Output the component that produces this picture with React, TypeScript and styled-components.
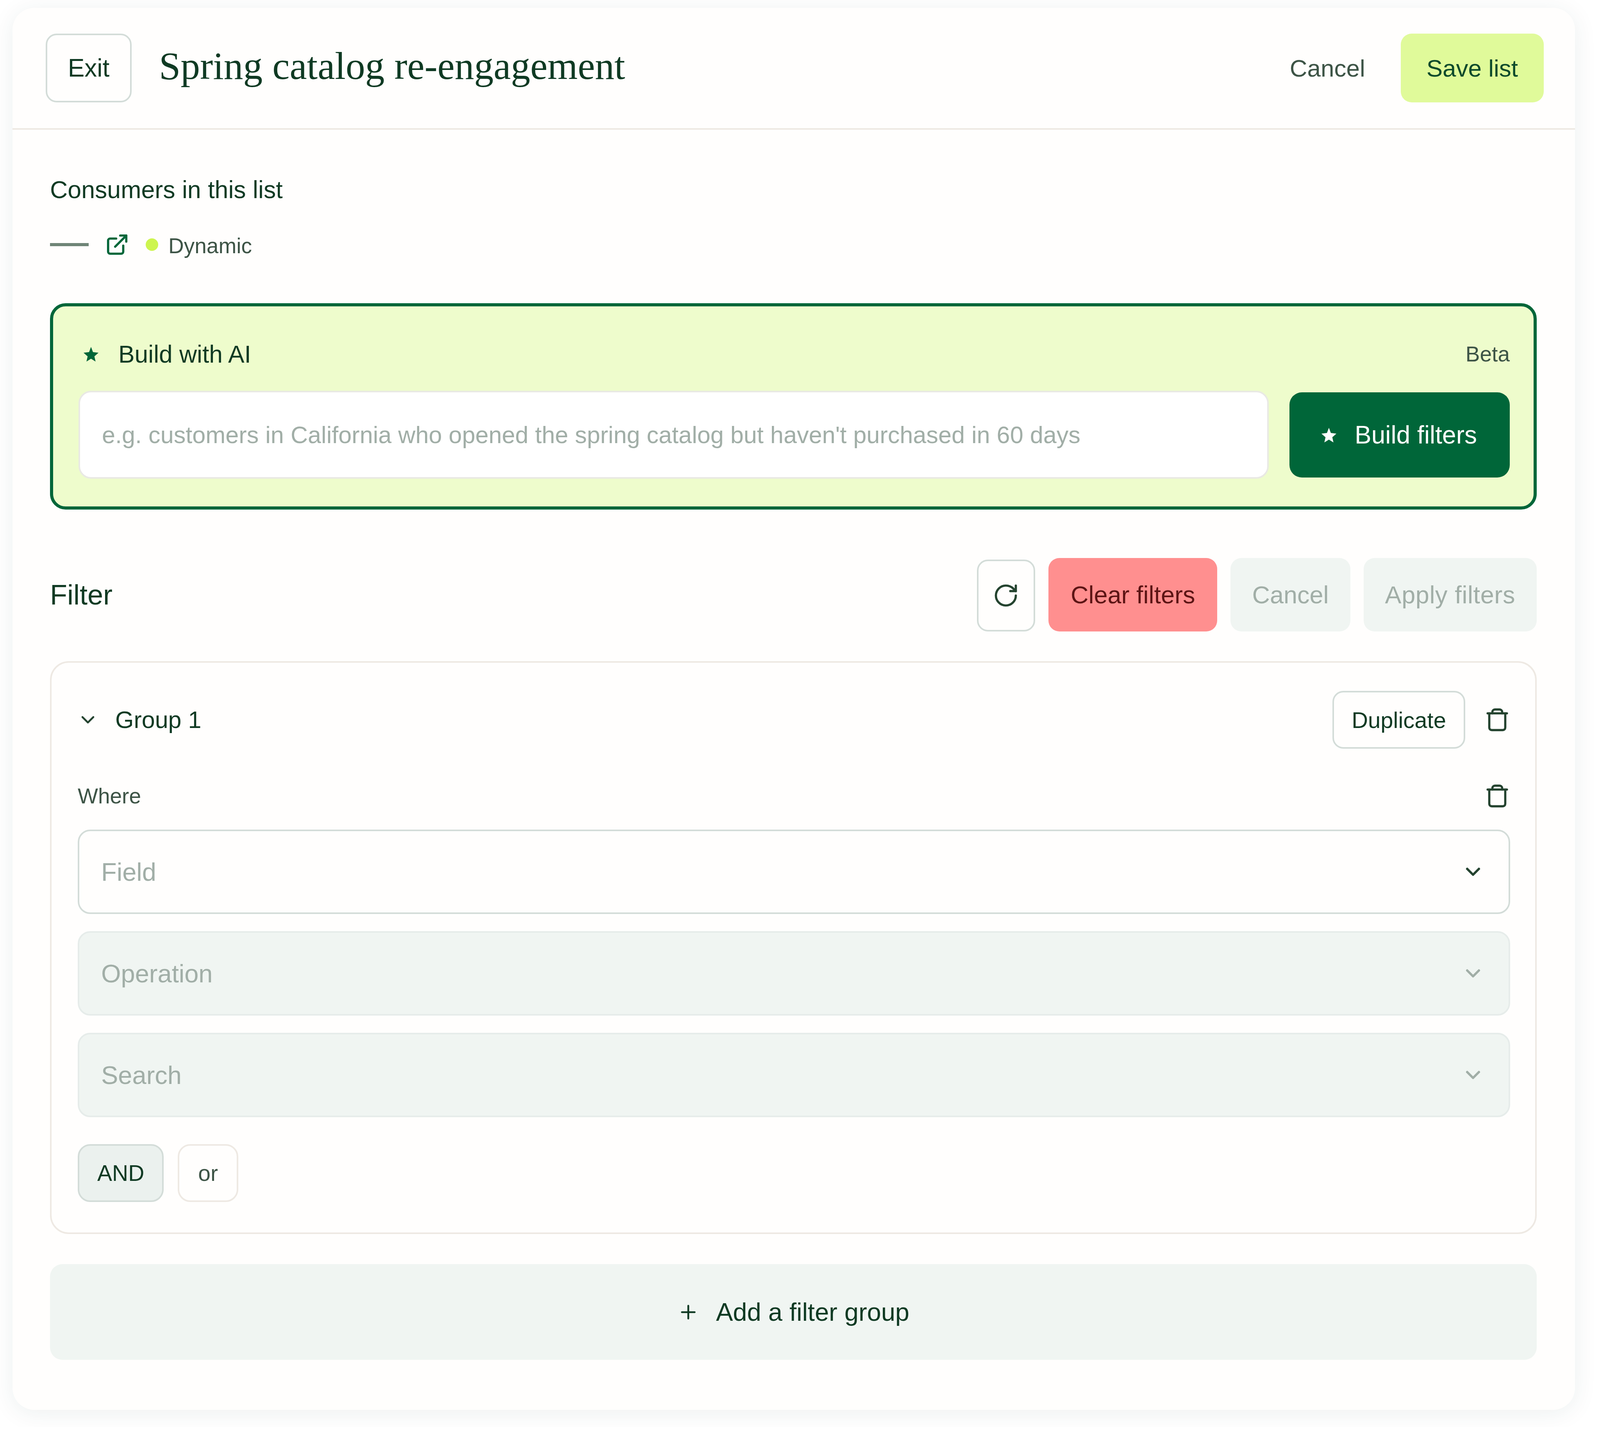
import styled, { createGlobalStyle } from 'styled-components';
import { ChevronDown, ExternalLink, Plus, RotateCw } from 'lucide-react';

// The page really opens at 4096x3680 (window.innerWidth), so horizontal sizes are the
// reference's x 0.8 and vertical sizes are the reference's.

const COLORS = {
  INK: '#0f3a23',
  BODY: '#3d5446',
  ICON: '#24432f',
  MUTED: '#a1aea7',
  GREEN: '#006639',
  LINE: '#d3dcd8',
  SOFT_LINE: '#eee9e3',
  DISABLED: '#f0f5f2',
  SURFACE: '#fffefd',
};

const GlobalStyle = createGlobalStyle`
  html, body {
    margin: 0;
    background: #ffffff;
  }
  body {
    font-family: "Liberation Sans", Arial, sans-serif;
    color: ${COLORS.INK};
  }
  * {
    box-sizing: border-box;
  }
  button {
    font-family: "Liberation Sans", Arial, sans-serif;
  }
`;

const StarIcon = ({ size, color }: { size: number; color: string }) => (
  <svg width={size} height={size} viewBox="0 0 24 24" fill={color}>
    <polygon points="12,1 15,9 23.5,10 17.2,15.6 19,23.5 12,19.2 5,23.5 6.8,15.6 0.5,10 9,9" />
  </svg>
);

const TrashIcon = () => (
  <svg width={66} height={66} viewBox="0 0 20 20" fill="none" stroke={COLORS.ICON} strokeWidth={1.7} strokeLinecap="round" strokeLinejoin="round">
    <path d="M2.5 5h15" />
    <path d="M6.2 5V4c0-1.2.9-2 2-2h3.6c1.1 0 2 .8 2 2v1" />
    <path d="M3.8 5v11c0 1.2.8 2 2 2h8.4c1.2 0 2-.8 2-2V5" />
  </svg>
);

const App = () => {
  return (
    <Page>
      <GlobalStyle />
      <Card>
        <Header>
          <HeaderLeft>
            <OutlineButton>Exit</OutlineButton>
            <Title>Spring catalog re-engagement</Title>
          </HeaderLeft>
          <HeaderRight>
            <GhostButton>Cancel</GhostButton>
            <SaveButton>Save list</SaveButton>
          </HeaderRight>
        </Header>

        <Content>
          <Summary>
            <SummaryTitle>Consumers in this list</SummaryTitle>
            <SummaryMeta>
              <Dash />
              <ExternalLink size={62} color={COLORS.GREEN} strokeWidth={2.2} />
              <Dot />
              <MetaText>Dynamic</MetaText>
            </SummaryMeta>
          </Summary>

          <AiBox>
            <AiHeader>
              <AiTitle>
                <StarSlot>
                  <StarIcon size={40} color={COLORS.GREEN} />
                </StarSlot>
                Build with AI
              </AiTitle>
              <Beta>Beta</Beta>
            </AiHeader>
            <AiRow>
              <AiInput>e.g. customers in California who opened the spring catalog but haven't purchased in 60 days</AiInput>
              <BuildButton>
                <StarIcon size={40} color="#ffffff" />
                Build filters
              </BuildButton>
            </AiRow>
          </AiBox>

          <FilterBar>
            <FilterTitle>Filter</FilterTitle>
            <FilterActions>
              <RefreshButton>
                <RotateCw size={68} color={COLORS.ICON} strokeWidth={2} />
              </RefreshButton>
              <ClearButton>Clear filters</ClearButton>
              <DisabledButton>Cancel</DisabledButton>
              <DisabledButton $wide>Apply filters</DisabledButton>
            </FilterActions>
          </FilterBar>

          <GroupCard>
            <GroupHeader>
              <GroupName>
                <ChevronDown size={56} color={COLORS.ICON} strokeWidth={2} />
                Group 1
              </GroupName>
              <GroupTools>
                <SmallButton>Duplicate</SmallButton>
                <TrashIcon />
              </GroupTools>
            </GroupHeader>
            <WhereRow>
              <WhereLabel>Where</WhereLabel>
              <TrashIcon />
            </WhereRow>
            <Fields>
              <SelectBox>
                Field
                <ChevronDown size={60} color={COLORS.ICON} strokeWidth={2.4} />
              </SelectBox>
              <SelectBox $disabled>
                Operation
                <ChevronDown size={60} color={COLORS.MUTED} strokeWidth={2.4} />
              </SelectBox>
              <SelectBox $disabled>
                Search
                <ChevronDown size={60} color={COLORS.MUTED} strokeWidth={2.4} />
              </SelectBox>
            </Fields>
            <LogicRow>
              <LogicButton $active>AND</LogicButton>
              <LogicButton>or</LogicButton>
            </LogicRow>
          </GroupCard>

          <AddGroup>
            <Plus size={56} color={COLORS.INK} strokeWidth={2} />
            Add a filter group
          </AddGroup>
        </Content>
      </Card>
    </Page>
  );
};

export default App;

const Page = styled.div`
  padding: 20px 64px 44px 32px;
`;

const Card = styled.div`
  height: 3588px;
  background: ${COLORS.SURFACE};
  border-radius: 56px;
  box-shadow: 0 8px 60px rgba(30, 70, 60, 0.08);
`;

const Header = styled.header`
  display: flex;
  align-items: center;
  justify-content: space-between;
  height: 312px;
  padding: 0 80px 0 85px;
  border-bottom: 4px solid ${COLORS.SOFT_LINE};
`;

const HeaderLeft = styled.div`
  display: flex;
  align-items: center;
  gap: 70px;
`;

const HeaderRight = styled.div`
  display: flex;
  align-items: center;
  gap: 35px;
`;

const OutlineButton = styled.button`
  width: 220px;
  height: 176px;
  background: ${COLORS.SURFACE};
  border: 4px solid ${COLORS.LINE};
  border-radius: 28px;
  font-size: 64px;
  color: ${COLORS.INK};
`;

const Title = styled.h1`
  margin: 0 0 12px;
  font: 400 99.5px "Liberation Serif", serif;
  color: ${COLORS.INK};
`;

const GhostButton = styled.button`
  height: 176px;
  padding: 0 56px;
  background: none;
  border: 0;
  font-size: 62px;
  color: ${COLORS.BODY};
`;

const SaveButton = styled.button`
  height: 176px;
  padding: 0 66px;
  background: #e0fa9a;
  border: 0;
  border-radius: 28px;
  font-size: 62px;
  color: #0b4a2b;
`;

const Content = styled.main`
  display: flex;
  flex-direction: column;
  padding: 0 98px 0 96px;
`;

const Summary = styled.section`
  display: flex;
  flex-direction: column;
  height: 444px;
  padding-top: 113px;
`;

const SummaryTitle = styled.div`
  font-size: 62.7px;
  line-height: 80px;
`;

const SummaryMeta = styled.div`
  display: flex;
  align-items: center;
  gap: 42px;
  margin-top: 51px;
  height: 100px;
`;

const Dash = styled.span`
  width: 99px;
  height: 8px;
  background: #6f8577;
`;

const Dot = styled.span`
  width: 32px;
  height: 32px;
  border-radius: 50%;
  background: #cdf54f;
`;

const MetaText = styled.span`
  margin: 6px 0 0 -16px;
  font-size: 55px;
  color: ${COLORS.BODY};
`;

const AiBox = styled.section`
  height: 528px;
  padding: 0 61px 0 65px;
  background: #eefccc;
  border: 8px solid ${COLORS.GREEN};
  border-radius: 40px;
`;

const AiHeader = styled.div`
  display: flex;
  align-items: center;
  justify-content: space-between;
  height: 216px;
  padding-top: 28px;
`;

const AiTitle = styled.div`
  display: flex;
  align-items: center;
  font-size: 62.4px;
`;

const StarSlot = styled.span`
  display: flex;
  width: 102px;
  padding-left: 12px;
`;

const Beta = styled.span`
  font-size: 55px;
  color: ${COLORS.BODY};
`;

const AiRow = styled.div`
  display: flex;
  align-items: center;
  gap: 53px;
`;

const AiInput = styled.div`
  flex: 1;
  display: flex;
  align-items: center;
  height: 225px;
  padding: 0 56px;
  background: #ffffff;
  border: 4px solid #e9e9e4;
  border-radius: 32px;
  font-size: 61.2px;
  color: ${COLORS.MUTED};
`;

const BuildButton = styled.button`
  display: flex;
  align-items: center;
  gap: 46px;
  height: 218px;
  padding: 0 84px 0 81px;
  background: ${COLORS.GREEN};
  border: 0;
  border-radius: 32px;
  font-size: 64px;
  color: #ffffff;
`;

const FilterBar = styled.div`
  display: flex;
  align-items: center;
  justify-content: space-between;
  margin-top: 124px;
  height: 188px;
`;

const FilterTitle = styled.h2`
  margin: 0;
  font-size: 72px;
  font-weight: 400;
`;

const FilterActions = styled.div`
  display: flex;
  gap: 34px;
`;

const RefreshButton = styled.button`
  display: flex;
  align-items: center;
  justify-content: center;
  width: 149px;
  height: 184px;
  margin-top: 4px;
  background: ${COLORS.SURFACE};
  border: 4px solid ${COLORS.LINE};
  border-radius: 28px;
`;

const ClearButton = styled.button`
  height: 188px;
  padding: 0 57px;
  background: #ff8f8f;
  border: 0;
  border-radius: 28px;
  font-size: 63px;
  color: #5c1414;
`;

const DisabledButton = styled.button<{ $wide?: boolean }>`
  height: 188px;
  padding: 0 55px;
  background: ${COLORS.DISABLED};
  border: 0;
  border-radius: 28px;
  font-size: 63px;
  letter-spacing: ${(p) => (p.$wide ? '0.6px' : '0')};
  color: ${COLORS.MUTED};
`;

const GroupCard = styled.section`
  display: flex;
  flex-direction: column;
  height: 1466px;
  margin-top: 76px;
  padding: 72px 64px 0 67px;
  border: 4px solid ${COLORS.SOFT_LINE};
  border-radius: 48px;
`;

const GroupHeader = styled.div`
  display: flex;
  align-items: center;
  justify-content: space-between;
  height: 148px;
`;

const GroupName = styled.div`
  display: flex;
  align-items: center;
  gap: 42px;
  margin-left: -2px;
  font-size: 61px;
`;

const GroupTools = styled.div`
  display: flex;
  align-items: center;
  gap: 49px;
`;

const SmallButton = styled.button`
  height: 148px;
  padding: 0 45px;
  background: ${COLORS.SURFACE};
  border: 4px solid ${COLORS.LINE};
  border-radius: 28px;
  font-size: 58px;
  color: ${COLORS.INK};
`;

const WhereRow = styled.div`
  display: flex;
  align-items: center;
  justify-content: space-between;
  height: 120px;
  margin-top: 61px;
`;

const WhereLabel = styled.span`
  font-size: 55px;
  color: ${COLORS.BODY};
`;

const Fields = styled.div`
  display: flex;
  flex-direction: column;
  gap: 44px;
  margin-top: 26px;
`;

const SelectBox = styled.div<{ $disabled?: boolean }>`
  display: flex;
  align-items: center;
  justify-content: space-between;
  height: 216px;
  padding: 0 61px 0 56px;
  background: ${(p) => (p.$disabled ? COLORS.DISABLED : COLORS.SURFACE)};
  border: 4px solid ${(p) => (p.$disabled ? '#e6ecea' : COLORS.LINE)};
  border-radius: 32px;
  font-size: 65px;
  color: ${COLORS.MUTED};
`;

const LogicRow = styled.div`
  display: flex;
  gap: 36px;
  margin-top: 69px;
`;

const LogicButton = styled.button<{ $active?: boolean }>`
  height: 148px;
  padding: 0 ${(p) => (p.$active ? 46 : 48)}px;
  background: ${(p) => (p.$active ? '#ebf1ee' : COLORS.SURFACE)};
  border: 4px solid ${(p) => (p.$active ? COLORS.LINE : COLORS.SOFT_LINE)};
  border-radius: 32px;
  font-size: 57px;
  color: ${(p) => (p.$active ? COLORS.INK : COLORS.BODY)};
`;

const AddGroup = styled.button`
  display: flex;
  align-items: center;
  justify-content: center;
  gap: 43px;
  height: 245px;
  margin-top: 77px;
  background: ${COLORS.DISABLED};
  border: 0;
  border-radius: 32px;
  font-size: 65px;
  color: ${COLORS.INK};
`;
